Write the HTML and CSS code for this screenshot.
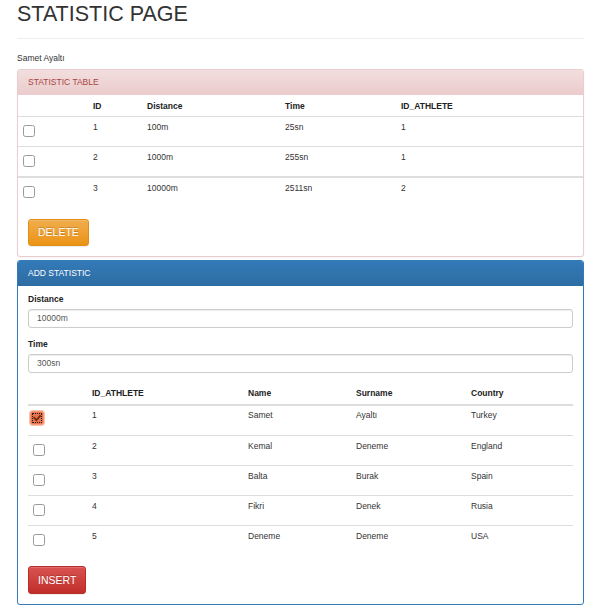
FILE: index.html
```html
<!DOCTYPE html>
<html>
<head>
<meta charset="utf-8">
<title>Statistic Page</title>
<link rel="stylesheet" href="styles.css">
</head>
<body>
<div class="page">
  <h1 class="title">STATISTIC PAGE</h1>
  <hr class="rule">
  <p class="user">Samet Ayaltı</p>

  <section class="panel panel-danger">
    <div class="panel-heading">STATISTIC TABLE</div>
    <div class="t1">
      <div class="t1-row t1-head">
        <div class="cell"></div>
        <div class="cell">ID</div>
        <div class="cell">Distance</div>
        <div class="cell">Time</div>
        <div class="cell">ID_ATHLETE</div>
      </div>
      <div class="t1-row">
        <div class="cell cell-chk"><span class="chk"></span></div>
        <div class="cell">1</div>
        <div class="cell">100m</div>
        <div class="cell">25sn</div>
        <div class="cell">1</div>
      </div>
      <div class="t1-row">
        <div class="cell cell-chk"><span class="chk"></span></div>
        <div class="cell">2</div>
        <div class="cell">1000m</div>
        <div class="cell">255sn</div>
        <div class="cell">1</div>
      </div>
      <div class="t1-row t1-sep">
        <div class="cell cell-chk"><span class="chk"></span></div>
        <div class="cell">3</div>
        <div class="cell">10000m</div>
        <div class="cell">2511sn</div>
        <div class="cell">2</div>
      </div>
    </div>
    <div class="panel-foot">
      <button class="btn btn-warning btn-delete">DELETE</button>
    </div>
  </section>

  <section class="panel panel-primary">
    <div class="panel-heading">ADD STATISTIC</div>
    <div class="panel-body">
      <div class="form-group">
        <label class="lbl">Distance</label>
        <div class="input">10000m</div>
      </div>
      <div class="form-group">
        <label class="lbl">Time</label>
        <div class="input">300sn</div>
      </div>
      <div class="t2">
        <div class="t2-row t2-head">
          <div class="cell"></div>
          <div class="cell">ID_ATHLETE</div>
          <div class="cell">Name</div>
          <div class="cell">Surname</div>
          <div class="cell">Country</div>
        </div>
        <div class="t2-row t2-first">
          <div class="cell cell-chk2"><span class="chk chk-on"><svg viewBox="0 0 14 14" width="14" height="14"><path d="M3.6 6.2 L6.4 9.2 L10.6 4.4" fill="none" stroke="#6e2c12" stroke-width="1.8"/></svg></span></div>
          <div class="cell">1</div>
          <div class="cell">Samet</div>
          <div class="cell">Ayaltı</div>
          <div class="cell">Turkey</div>
        </div>
        <div class="t2-row">
          <div class="cell cell-chk"><span class="chk"></span></div>
          <div class="cell">2</div>
          <div class="cell">Kemal</div>
          <div class="cell">Deneme</div>
          <div class="cell">England</div>
        </div>
        <div class="t2-row">
          <div class="cell cell-chk"><span class="chk"></span></div>
          <div class="cell">3</div>
          <div class="cell">Balta</div>
          <div class="cell">Burak</div>
          <div class="cell">Spain</div>
        </div>
        <div class="t2-row">
          <div class="cell cell-chk"><span class="chk"></span></div>
          <div class="cell">4</div>
          <div class="cell">Fikri</div>
          <div class="cell">Denek</div>
          <div class="cell">Rusia</div>
        </div>
        <div class="t2-row">
          <div class="cell cell-chk"><span class="chk"></span></div>
          <div class="cell">5</div>
          <div class="cell">Deneme</div>
          <div class="cell">Deneme</div>
          <div class="cell">USA</div>
        </div>
      </div>
      <button class="btn btn-danger btn-insert">INSERT</button>
    </div>
  </section>
</div>
</body>
</html>
```

FILE: styles.css
```css
* { box-sizing: border-box; }

html, body {
  margin: 0;
  padding: 0;
  background: #fff;
}

body {
  font-family: "Liberation Sans", Arial, Helvetica, sans-serif;
  font-size: 8.5px;
  line-height: 12px;
  color: #333;
}

.page {
  padding: 0 15px 0 17px;
}

.title {
  margin: 0;
  padding-top: 1px;
  font-size: 21.5px;
  line-height: 26px;
  font-weight: normal;
  color: #333;
}

.rule {
  margin: 11px 0 0;
  border: 0;
  border-top: 1px solid #eee;
  height: 0;
}

.user {
  margin: 13px 0 0;
  line-height: 12px;
}

.panel {
  background: #fff;
  border: 1px solid;
  border-radius: 3px;
  margin-top: 5px;
  box-shadow: 0 1px 2px rgba(0, 0, 0, .05);
}

.panel-danger { border-color: #ebccd1; }
.panel-primary { border-color: #337ab7; margin-top: 3px; }

.panel-heading {
  height: 25px;
  padding: 6px 10px 0;
  line-height: 12px;
  border-bottom: 1px solid;
  border-radius: 2px 2px 0 0;
}

.panel-danger .panel-heading {
  color: #a94442;
  background: linear-gradient(to bottom, #f2dede 0, #ebcccc 100%);
  border-color: #ebccd1;
}

.panel-primary .panel-heading {
  color: #fff;
  background: linear-gradient(to bottom, #337ab7 0, #2e6da4 100%);
  border-color: #2e6da4;
}

/* table 1 */
.t1-row {
  display: grid;
  grid-template-columns: 70px 54px 138px 116px 1fr;
  height: 30px;
  border-top: 1px solid #ddd;
}

.t1-head {
  height: 22px;
  border-top: 0;
  border-bottom: 1px solid #ddd;
  font-weight: bold;
  color: #222;
}

.t1-head + .t1-row { border-top: 0; height: 29px; }

.t1-sep { border-top: 2px solid #ddd; height: 32px; }

.cell {
  padding: 4px 5px 0;
  line-height: 13px;
  white-space: nowrap;
}

.t1-head .cell { padding-top: 5px; line-height: 12px; }

.cell-chk { padding-top: 8px; }

.chk {
  display: block;
  width: 12px;
  height: 12px;
  border: 1px solid #9a9a9a;
  border-radius: 2.5px;
  background: #fff;
}

.chk-on {
  position: relative;
  width: 14px;
  height: 14px;
  background: #e9724a;
  border: 1px solid #f39a78;
  border-radius: 3px;
  box-shadow: 0 0 0 1px #f8c0a8;
  outline: 1px dotted #1e1e1e;
  outline-offset: -3px;
  margin-left: -3px;
}

.chk-on svg {
  position: absolute;
  left: -1px;
  top: -1px;
}

.panel-foot {
  padding: 11px 10px 10px;
}

.btn {
  display: inline-block;
  height: 28px;
  padding: 0 9px;
  font-family: "Liberation Sans", Arial, Helvetica, sans-serif;
  font-size: 10.5px;
  line-height: 26px;
  color: #fff;
  border: 1px solid;
  border-radius: 3px;
  text-shadow: 0 -1px 0 rgba(0, 0, 0, .2);
  box-shadow: inset 0 1px 0 rgba(255, 255, 255, .15), 0 1px 1px rgba(0, 0, 0, .075);
}

.btn-warning {
  background: linear-gradient(to bottom, #f0ad4e 0, #eb9316 100%);
  border-color: #e38d13;
  height: 27px;
  line-height: 25px;
}

.btn-danger {
  background: linear-gradient(to bottom, #d9534f 0, #c12e2a 100%);
  border-color: #b92c28;
  margin-top: 11px;
  display: block;
}

/* panel 2 */
.panel-body {
  padding: 7px 10px 10px;
}

.form-group { margin-bottom: 10px; }

.lbl {
  display: block;
  font-weight: bold;
  line-height: 12px;
  margin-bottom: 3.5px;
  color: #222;
}

.input {
  height: 19.5px;
  padding: 0 8px;
  line-height: 17.5px;
  color: #555;
  border: 1px solid #ccc;
  border-radius: 3px;
  box-shadow: inset 0 1px 1px rgba(0, 0, 0, .075);
}

.t2-row {
  display: grid;
  grid-template-columns: 59px 156px 108px 115px 1fr;
  height: 30px;
  border-top: 1px solid #ddd;
}

.t2-head {
  height: 23px;
  border-top: 0;
  border-bottom: 2px solid #ddd;
  font-weight: bold;
  color: #222;
}

.t2-head .cell { padding-top: 4px; line-height: 12px; }

.t2-first { border-top: 0; height: 29px; }
.t2-first .cell { padding-top: 3px; }
.t2-first .cell-chk2 { padding-top: 5px; padding-left: 5px; }
```
